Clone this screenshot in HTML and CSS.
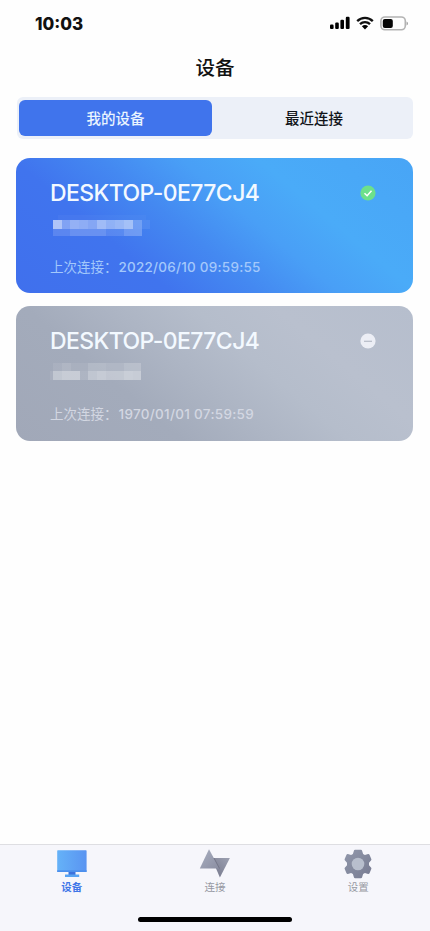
FILE: index.html
```html
<!DOCTYPE html>
<html lang="zh-CN">
<head>
<meta charset="utf-8">
<title>设备</title>
<link rel="stylesheet" href="styles.css">
</head>
<body>
<div class="app">
  <header class="status">
    <span class="time">10:03</span>
    <div class="indicators">
      <svg class="signal" width="20" height="14" viewBox="0 0 20 14"><rect x="0" y="8.6" width="3.6" height="4.4" rx="1.1"/><rect x="5.2" y="6.6" width="3.6" height="6.4" rx="1.1"/><rect x="10.4" y="3.8" width="3.6" height="9.2" rx="1.1"/><rect x="15.8" y="0.8" width="3.8" height="12.2" rx="1.1"/></svg>
      <svg class="wifi" width="18" height="14" viewBox="0 0 18 14"><g fill="none" stroke="#111" stroke-width="2.3"><path d="M1.2 5.1C5.6.7 12.4.7 16.8 5.1"/><path d="M4 8.2C6.8 5.5 11.2 5.5 14 8.2"/></g><path d="M9 13.4 5.9 10.3c1.7-1.6 4.5-1.6 6.2 0z"/></svg>
      <svg class="battery" width="29" height="15" viewBox="0 0 29 15"><rect x=".9" y="1" width="24.4" height="12.8" rx="4" fill="none" stroke="#b3b3b3" stroke-width="1.6"/><rect x="2.8" y="2.9" width="10" height="9" rx="2" fill="#060606"/><path d="M26.6 5.4c1.6.6 1.6 3.4 0 4z" fill="#8b8b8b"/></svg>
    </div>
  </header>
  <h1 class="title">设备</h1>
  <div class="tabs">
    <button class="tab selected">我的设备</button>
    <button class="tab">最近连接</button>
  </div>
  <main class="devices">
    <section class="card online">
      <div class="row">
        <h2>DESKTOP-0E77CJ4</h2>
        <svg class="state" width="16" height="16" viewBox="0 0 16 16"><circle cx="8" cy="8" r="7.6" fill="#6de08b"/><path d="m4.5 8.2 2.6 2.5 4.4-4.9" fill="none" stroke="#fff" stroke-width="1.5"/></svg>
      </div>
      <svg class="masked" width="104" height="21" viewBox="0 0 104 21" fill="#fff" shape-rendering="crispEdges"><rect x="8" y="0" width="88" height="5" opacity=".03"/><rect x="3" y="5" width="9" height="9" opacity=".58"/><rect x="12" y="5" width="8" height="9" opacity=".34"/><rect x="20" y="5" width="9" height="9" opacity=".44"/><rect x="29" y="5" width="9" height="9" opacity=".41"/><rect x="38" y="5" width="9" height="9" opacity=".36"/><rect x="47" y="5" width="9" height="9" opacity=".5"/><rect x="56" y="5" width="9" height="9" opacity=".42"/><rect x="65" y="5" width="9" height="9" opacity=".46"/><rect x="74" y="5" width="9" height="9" opacity=".52"/><rect x="83" y="5" width="9" height="9" opacity=".25"/><rect x="92" y="5" width="8" height="9" opacity=".07"/><rect x="3" y="14" width="17" height="7" opacity=".14"/><rect x="20" y="14" width="36" height="7" opacity=".21"/><rect x="56" y="14" width="18" height="7" opacity=".13"/><rect x="74" y="14" width="18" height="7" opacity=".24"/></svg>
      <p>上次连接：<span class="date">2022/06/10 09:59:55</span></p>
    </section>
    <section class="card offline">
      <div class="row">
        <h2>DESKTOP-0E77CJ4</h2>
        <svg class="state" width="16" height="16" viewBox="0 0 16 16"><circle cx="8" cy="8" r="7.6" fill="#eceef5"/><path d="M4 8.3h8" stroke="#b6bac7" stroke-width="1.2"/></svg>
      </div>
      <svg class="masked" width="104" height="21" viewBox="0 0 104 21" fill="#fff" shape-rendering="crispEdges"><rect x="3" y="1" width="9" height="8" opacity=".08"/><rect x="12" y="1" width="9" height="8" opacity=".14"/><rect x="21" y="1" width="17" height="8" opacity=".07"/><rect x="38" y="1" width="18" height="8" opacity=".17"/><rect x="56" y="1" width="18" height="8" opacity=".12"/><rect x="74" y="1" width="17" height="8" opacity=".2"/><rect x="0" y="9" width="3" height="9" opacity=".08"/><rect x="3" y="9" width="9" height="9" opacity=".34"/><rect x="12" y="9" width="9" height="9" opacity=".4"/><rect x="21" y="9" width="9" height="9" opacity=".4"/><rect x="30" y="9" width="8" height="9" opacity=".12"/><rect x="38" y="9" width="9" height="9" opacity=".32"/><rect x="47" y="9" width="9" height="9" opacity=".38"/><rect x="56" y="9" width="18" height="9" opacity=".33"/><rect x="74" y="9" width="9" height="9" opacity=".4"/><rect x="83" y="9" width="8" height="9" opacity=".37"/></svg>
      <p>上次连接：<span class="date">1970/01/01 07:59:59</span></p>
    </section>
  </main>
  <nav class="bottom">
    <div class="items">
      <a class="item active">
        <svg width="32" height="30" viewBox="0 0 32 30"><defs><linearGradient id="screen" x1="0" y1="0" x2="1" y2="0"><stop stop-color="#65b2f8"/><stop offset="1" stop-color="#5a94f1"/></linearGradient></defs><path d="M12.5 22h7v4h-7z" fill="#3c72dc"/><path d="M9 25.5h14.2V28H9z" fill="#58a3f3"/><rect x="1.2" y="1.2" width="29.4" height="21.8" rx=".7" fill="url(#screen)"/><path d="M1.2 21.3h29.4V23H1.2z" fill="#4b8fed"/></svg>
        <span>设备</span>
      </a>
      <a class="item">
        <svg width="32" height="30" viewBox="0 0 32 30"><defs><linearGradient id="up" x1="0" y1="0" x2="1" y2="1"><stop stop-color="#a9afc0"/><stop offset="1" stop-color="#8b8ea2"/></linearGradient><linearGradient id="down" x1="1" y1="0" x2="0" y2="1"><stop stop-color="#9da1b2"/><stop offset="1" stop-color="#737589"/></linearGradient></defs><path d="M12.6 9.1h18.3L20.9 28.5z" fill="url(#down)"/><path d="M10 .2 20.5 19.5H.8z" fill="url(#up)"/><path d="M15 9.1 20.5 19.5" stroke="#747688"/></svg>
        <span>连接</span>
      </a>
      <a class="item">
        <svg width="32" height="30" viewBox="0 0 32 30"><defs><linearGradient id="gear" x1="0" y1="0" x2="1" y2="1"><stop stop-color="#9198ab"/><stop offset="1" stop-color="#777b91"/></linearGradient></defs><path d="M11.9 1.7q.2-1 1.2-1h5.8q1 0 1.2 1l1 3.2 1.8 1.1 3.2-.9q.9-.2 1.4.6l1.8 4.2q.4.9-.3 1.6l-2 2.2v2.6l2 2.2q.7.7.3 1.6l-1.8 4.2q-.5.8-1.4.6l-3.2-.9-1.8 1.1-1 3.2q-.2 1-1.2 1h-5.8q-1 0-1.2-1l-1-3.2L9.1 24l-3.2.9q-.9.2-1.4-.6l-1.8-4.2q-.4-.9.3-1.6l2-2.2v-2.6l-2-2.2q-.7-.7-.3-1.6l1.8-4.2q.5-.8 1.4-.6l3.2.9 1.8-1.1z" fill="url(#gear)"/><circle cx="16" cy="15" r="6.3" fill="#b8bfcd"/></svg>
        <span>设置</span>
      </a>
    </div>
    <div class="home"></div>
  </nav>
</div>
</body>
</html>
```

FILE: styles.css
```css
* { box-sizing: border-box; }
body { margin: 0; background: #fefefe; font-family: Inter, "Noto Sans CJK SC", sans-serif; color: #111; }
h1, h2, p { margin: 0; }
svg { display: block; flex: none; }
.app { height: 931px; display: flex; flex-direction: column; overflow: hidden; }
.status { height: 46px; padding: 0 21px 0 35px; display: flex; align-items: center; justify-content: space-between; }
.time { padding-top: 1px; font-size: 17px; font-weight: 800; line-height: 20px; }
.indicators { display: flex; align-items: center; gap: 6px; }
.title { height: 44px; line-height: 44px; text-align: center; font-size: 19.5px; font-weight: 500; }
.tabs { display: flex; height: 42px; margin: 7px 17px 0; padding: 3px 2px; background: #ecf0f8; border-radius: 6px; }
.tab { flex: 1; padding: 2px 0 0 5px; border: 0; border-radius: 6px; background: none; color: #111418; font: 500 14.5px/34px Inter, "Noto Sans CJK SC", sans-serif; }
.tab.selected { flex: 0 0 193px; padding-left: 0; background: #4074ec; color: #eaf5ff; }
.devices { flex: 1; margin: 19px 17px 0 16px; display: flex; flex-direction: column; gap: 13px; }
.card { height: 135px; border-radius: 14px; padding: 20px 37px 0 34px; color: #f3f9ff; }
.online { background: linear-gradient(40deg, #4070ed 0%, #4074ee 28%, #4489f1 44%, #499ff6 58%, #4aabf8 72%, #48a5f6 100%); }
.offline { background: linear-gradient(40deg, #a1a8b8 0%, #a3abbb 30%, #adb5c4 46%, #b5bdcb 60%, #b9c0ce 75%, #b6becd 100%); }
.row { display: flex; justify-content: space-between; align-items: center; height: 30px; }
.row h2 { font-size: 23px; line-height: 30px; font-weight: 500; letter-spacing: -.6px; white-space: nowrap; }
.masked { margin-top: 7px; height: 21px; }
.offline .masked { margin-top: 6px; margin-bottom: 2px; }
.card p { margin-top: 21px; font-size: 13.5px; line-height: 20px; color: #a3c8fb; white-space: nowrap; }
.offline p { color: #d3d7e2; }
.date { margin-left: 1px; font-size: 13.5px; font-weight: 500; letter-spacing: .23px; }
.offline .date { letter-spacing: .3px; }
.bottom { height: 87px; border-top: 1px solid #dedee2; background: #f6f6fb; }
.items { display: grid; grid-template-columns: repeat(3, 1fr); height: 72px; }
.item { display: flex; flex-direction: column; align-items: center; padding-top: 4px; font-size: 10.5px; line-height: 18px; color: #9699a3; }
.active { color: #3e75e8; font-weight: 700; }
.home { width: 154px; height: 5px; border-radius: 3px; background: #000; margin: 0 auto; }
```
